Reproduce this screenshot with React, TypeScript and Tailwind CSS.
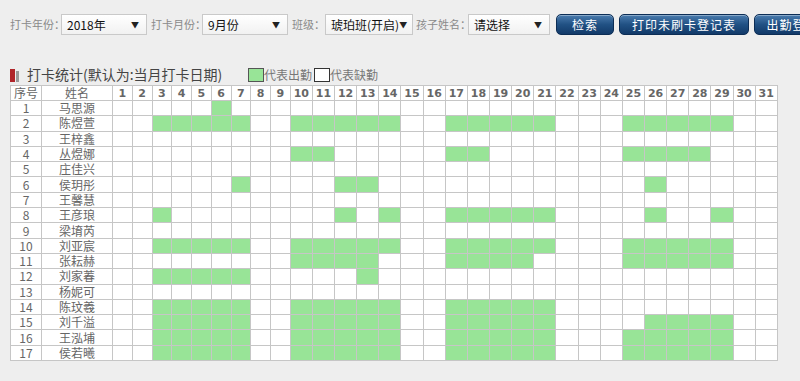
const font = "font-['Microsoft_YaHei','Noto_Sans_CJK_SC',sans-serif]"

// [name, days present]
const rows: [string, string][] = [
  ["马思源", "6"],
  ["陈煜萱", "3-7,10-14,17-21,25-29"],
  ["王梓鑫", ""],
  ["丛煜娜", "10-11,17-18,25-28"],
  ["庄佳兴", ""],
  ["侯玥彤", "7,12-13,26"],
  ["王馨慧", ""],
  ["王彦琅", "3,12,14,17-21,26,29"],
  ["梁堉芮", ""],
  ["刘亚宸", "3-7,10-14,17-21,25-29"],
  ["张耘赫", "10-13,17-20,25-29"],
  ["刘家萶", "3-7,13"],
  ["杨妮可", ""],
  ["陈玟羲", "3-7,10-14,17-21"],
  ["刘千溢", "3-7,10-14,17-21,26-29"],
  ["王泓埔", "3-7,10-14,17-21,25-29"],
  ["侯若曦", "3-7,10-14,17-21,25-29"],
]

function expand(spec: string) {
  const set = new Set<number>()
  spec.split(",").filter(Boolean).forEach((part) => {
    const [a, b] = part.split("-").map(Number)
    for (let d = a; d <= (b ?? a); d++) set.add(d)
  })
  return set
}

const days = Array.from({ length: 31 }, (_, i) => i + 1)

function Select({ value, width }: { value: string; width: string }) {
  return (
    <div
      className={`${width} h-[21px] shrink-0 flex items-center justify-between pl-[5px] pr-[7px] border border-[#c9c9c9] bg-linear-to-b from-white to-[#f1f1f1] text-[12px] text-[#111]`}
    >
      <span>{value}</span>
      <span className="text-[8px] text-[#222]">▼</span>
    </div>
  )
}

function Button({ label, width }: { label: string; width: string }) {
  return (
    <div
      className={`${width} h-[21px] shrink-0 flex items-center justify-center rounded-[5px] border border-[#0c2d55] bg-linear-to-b from-[#4a7cae] via-[#215184] to-[#123a69] text-white text-[12px] tracking-[1px] shadow-[inset_0_1px_0_rgba(255,255,255,0.35)]`}
    >
      {label}
    </div>
  )
}

export default function App() {
  return (
    <div className={`w-[800px] h-[381px] overflow-hidden bg-[#eeeeee] ${font}`}>
      {/* filter bar */}
      <div className="flex items-center pt-[14px] pl-[10px] text-[11px] text-[#8a8a8a] whitespace-nowrap">
        <span className="w-[51px] shrink-0">打卡年份：</span>
        <Select value="2018年" width="w-[86px]" />
        <span className="w-[51px] shrink-0 ml-[4px]">打卡月份：</span>
        <Select value="9月份" width="w-[86px]" />
        <span className="w-[33px] shrink-0 ml-[4px]">班级：</span>
        <Select value="琥珀班(开启)" width="w-[88px]" />
        <span className="w-[52px] shrink-0 ml-[3px]">孩子姓名：</span>
        <Select value="请选择" width="w-[82px]" />
        <div className="ml-[6px] flex gap-[5px] shrink-0">
          <Button label="检索" width="w-[58px]" />
          <Button label="打印未刷卡登记表" width="w-[130px]" />
          <Button label="出勤登记表" width="w-[90px]" />
        </div>
      </div>

      {/* title */}
      <div className="flex items-end mt-[29px] pl-[10px] h-[21px] whitespace-nowrap">
        <span className="w-[5px] h-[13px] bg-[#b0252a] mb-[3px]" />
        <span className="w-[3px] h-[11px] bg-[#9a9a9a] ml-[1px] mb-[3px]" />
        <span className="ml-[8px] w-[198px] text-[14px] leading-[21px] text-[#444]">打卡统计(默认为:当月打卡日期)</span>
        <div className="ml-[23px] flex items-center text-[12px] text-[#777] mb-[1px]">
          <span className="w-[16px] h-[14px] bg-[#98e497] border border-[#555]" />
          <span>代表出勤</span>
          <span className="ml-[2px] w-[16px] h-[14px] bg-white border border-[#333]" />
          <span>代表缺勤</span>
        </div>
      </div>

      {/* table */}
      <table className="ml-[10px] w-[767px] table-fixed border-collapse bg-white text-[12px] text-[#666]">
        <colgroup>
          <col className="w-[31px]" />
          <col className="w-[71px]" />
          {days.map((d) => (
            <col key={d} className={d < 10 ? "w-[19.75px]" : "w-[22.15px]"} />
          ))}
        </colgroup>
        <thead>
          <tr className="h-[15px]">
            <th className="border border-[#c6c6c6] p-0 font-normal leading-none">序号</th>
            <th className="border border-[#c6c6c6] p-0 font-normal leading-none">姓名</th>
            {days.map((d) => (
              <th
                key={d}
                className="border border-[#c6c6c6] p-0 leading-none font-bold text-[11px] text-[#666] font-['DejaVu_Sans',sans-serif]"
              >
                {d}
              </th>
            ))}
          </tr>
        </thead>
        <tbody>
          {rows.map(([name, spec], i) => {
            const present = expand(spec)
            return (
              <tr key={name} className="h-[15.3px]">
                <td className="border border-[#c6c6c6] p-0 text-center leading-none">{i + 1}</td>
                <td className="border border-[#c6c6c6] p-0 text-center leading-none">{name}</td>
                {days.map((d) => (
                  <td
                    key={d}
                    className={`border border-[#c6c6c6] p-0 ${present.has(d) ? "bg-[#98e497]" : ""}`}
                  />
                ))}
              </tr>
            )
          })}
        </tbody>
      </table>
    </div>
  )
}
